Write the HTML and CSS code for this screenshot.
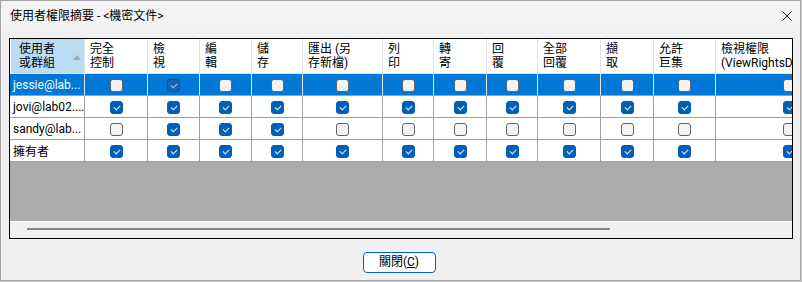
FILE: index.html
```html
<!DOCTYPE html>
<html lang="zh-Hant">
<head>
<meta charset="utf-8">
<title>使用者權限摘要</title>
<link rel="stylesheet" href="styles.css">
</head>
<body>
<div class="dialog">
  <div class="titlebar">
    <span class="title">使用者權限摘要 - &lt;機密文件&gt;</span>
    <svg class="close" viewBox="0 0 10 10" width="10" height="10"><path d="M0.5 0.5 L9.5 9.5 M9.5 0.5 L0.5 9.5" stroke="#1b1b1b" stroke-width="1" fill="none"/></svg>
  </div>
  <div class="content">
    <div class="grid">
      <div class="row head">
        <div class="cell first"><span>使用者<br>或群組</span><span class="sort"></span></div>
        <div class="cell">完全<br>控制</div>
        <div class="cell">檢<br>視</div>
        <div class="cell">編<br>輯</div>
        <div class="cell">儲<br>存</div>
        <div class="cell">匯出 (另<br>存新檔)</div>
        <div class="cell">列<br>印</div>
        <div class="cell">轉<br>寄</div>
        <div class="cell">回<br>覆</div>
        <div class="cell">全部<br>回覆</div>
        <div class="cell">擷<br>取</div>
        <div class="cell">允許<br>巨集</div>
        <div class="cell">檢視權限<br>(ViewRightsData)</div>
      </div>
      <div class="row sel">
        <div class="cell name">jessie@lab...</div>
        <div class="cell"><span class="cb"></span></div>
        <div class="cell"><span class="cb on"></span></div>
        <div class="cell"><span class="cb"></span></div>
        <div class="cell"><span class="cb"></span></div>
        <div class="cell"><span class="cb"></span></div>
        <div class="cell"><span class="cb"></span></div>
        <div class="cell"><span class="cb"></span></div>
        <div class="cell"><span class="cb"></span></div>
        <div class="cell"><span class="cb"></span></div>
        <div class="cell"><span class="cb"></span></div>
        <div class="cell"><span class="cb"></span></div>
        <div class="cell"><span class="cb"></span></div>
      </div>
      <div class="row">
        <div class="cell name">jovi@lab02....</div>
        <div class="cell"><span class="cb on"></span></div>
        <div class="cell"><span class="cb on"></span></div>
        <div class="cell"><span class="cb on"></span></div>
        <div class="cell"><span class="cb on"></span></div>
        <div class="cell"><span class="cb on"></span></div>
        <div class="cell"><span class="cb on"></span></div>
        <div class="cell"><span class="cb on"></span></div>
        <div class="cell"><span class="cb on"></span></div>
        <div class="cell"><span class="cb on"></span></div>
        <div class="cell"><span class="cb on"></span></div>
        <div class="cell"><span class="cb on"></span></div>
        <div class="cell"><span class="cb on"></span></div>
      </div>
      <div class="row">
        <div class="cell name">sandy@lab...</div>
        <div class="cell"><span class="cb"></span></div>
        <div class="cell"><span class="cb on"></span></div>
        <div class="cell"><span class="cb on"></span></div>
        <div class="cell"><span class="cb on"></span></div>
        <div class="cell"><span class="cb"></span></div>
        <div class="cell"><span class="cb"></span></div>
        <div class="cell"><span class="cb"></span></div>
        <div class="cell"><span class="cb"></span></div>
        <div class="cell"><span class="cb"></span></div>
        <div class="cell"><span class="cb"></span></div>
        <div class="cell"><span class="cb"></span></div>
        <div class="cell"><span class="cb"></span></div>
      </div>
      <div class="row">
        <div class="cell name">擁有者</div>
        <div class="cell"><span class="cb on"></span></div>
        <div class="cell"><span class="cb on"></span></div>
        <div class="cell"><span class="cb on"></span></div>
        <div class="cell"><span class="cb on"></span></div>
        <div class="cell"><span class="cb on"></span></div>
        <div class="cell"><span class="cb on"></span></div>
        <div class="cell"><span class="cb on"></span></div>
        <div class="cell"><span class="cb on"></span></div>
        <div class="cell"><span class="cb on"></span></div>
        <div class="cell"><span class="cb on"></span></div>
        <div class="cell"><span class="cb on"></span></div>
        <div class="cell"><span class="cb on"></span></div>
      </div>
      <div class="empty"></div>
      <div class="hscroll"><div class="thumb"></div></div>
    </div>
    <div class="footer">
      <button class="btn" type="button">關閉(<u>C</u>)</button>
    </div>
  </div>
</div>
</body>
</html>
```

FILE: styles.css
```css
* { box-sizing: border-box; }
html, body { margin: 0; padding: 0; }
body {
  width: 802px;
  height: 282px;
  overflow: hidden;
  background: #cfcfcf;
  font-family: Roboto, "Noto Sans CJK TC", sans-serif;
  font-size: 12px;
  color: #000;
}
.dialog {
  width: 801px;
  height: 281px;
  border: 1px solid #a3a3a3;
  background: #f0f0f0;
  display: flex;
  flex-direction: column;
}
.titlebar {
  height: 30px;
  flex: none;
  background: #f3f3f3;
  display: flex;
  align-items: center;
  padding: 0 8px 0 9px;
}
.title { flex: 1; line-height: 14px; }
.close { display: block; }
.content { padding: 7px 7px 0 8px; }
.grid {
  border: 1px solid #000;
  height: 201px;
  display: flex;
  flex-direction: column;
  overflow: hidden;
  background: #fff;
}
.row {
  flex: none;
  display: grid;
  grid-template-columns: 75px 63px 52px 52px 51px 80px 51px 53px 51px 63px 53px 62px 148px;
  height: 22px;
}
.cell {
  border-right: 1px solid #a0a0a0;
  border-bottom: 1px solid #a0a0a0;
  display: flex;
  align-items: center;
  justify-content: center;
  min-width: 0;
}
.name {
  justify-content: flex-start;
  padding-left: 3px;
  white-space: nowrap;
  overflow: hidden;
}
.head { height: 35px; }
.head .cell {
  border-right-color: #e1e1e1;
  border-bottom-color: #e1e1e1;
  align-items: flex-start;
  justify-content: flex-start;
  padding: 3px 0 0 5px;
  line-height: 14px;
  white-space: nowrap;
  overflow: hidden;
}
.head .first {
  background: #bcdcf4;
  border-left: 1px solid #fff;
  padding-left: 8px;
}
.sort {
  width: 0;
  height: 0;
  border-left: 4.5px solid transparent;
  border-right: 4.5px solid transparent;
  border-bottom: 5px solid #a6a6a6;
  margin: 13px 3px 0 auto;
}
.sel { background: #0078d7; color: #fff; }
.sel .cell { border-right-color: #e4e4e4; }
.cb {
  width: 13px;
  height: 13px;
  border-radius: 3px;
  border: 1px solid #636363;
  background: #f3f3f3;
  position: relative;
  margin-top: 1px;
}
.cb.on { background: #005fb8; border-color: #005fb8; }
.cb.on::after {
  content: "";
  position: absolute;
  left: 3px;
  top: 3px;
  width: 5px;
  height: 3px;
  border-left: 1px solid #e4edf7;
  border-bottom: 1px solid #e4edf7;
  transform: rotate(-45deg);
}
.sel .cb.on { background: #1463b5; border-color: #0d54a0; }
.sel .cb.on::after { border-color: #9ec2ea; }
.empty { flex: none; height: 59px; background: #ababab; }
.hscroll {
  flex: 1;
  border-top: 1px solid #fff;
  background: #f0f0f0;
  padding: 6px 0 0 17px;
}
.thumb { width: 583px; height: 2px; background: #858585; }
.footer {
  display: flex;
  justify-content: center;
  padding: 13px 4px 0 0;
}
.btn {
  width: 73px;
  height: 21px;
  padding: 0;
  border: 1px solid #0067c0;
  border-radius: 4px;
  background: #fdfdfd;
  font-family: Roboto, "Noto Sans CJK TC", sans-serif;
  font-size: 12px;
  line-height: 17px;
  color: #000;
}
.btn u { text-decoration: underline; }
```
